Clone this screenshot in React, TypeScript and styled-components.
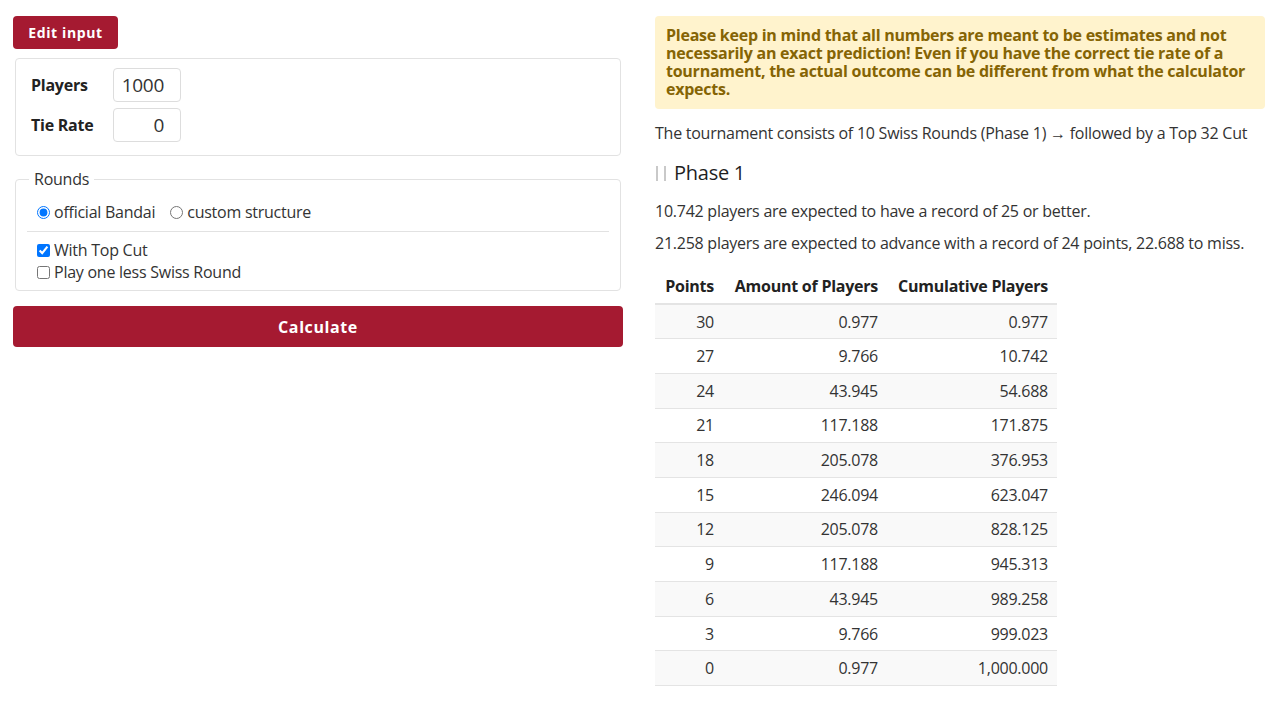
import React from "react";
import styled, { createGlobalStyle } from "styled-components";

const GlobalStyle = createGlobalStyle`
  body {
    margin: 0;
    background: #fff;
    font-family: "Open Sans", "Noto Sans", sans-serif;
    font-size: 16px;
    letter-spacing: -0.25px;
    color: #333;
  }
  * { box-sizing: border-box; }
`;

const Page = styled.div`
  display: grid;
  grid-template-columns: 610px 610px;
  column-gap: 32px;
  padding: 16px 13px;
  align-items: start;
`;

const Column = styled.div`
  display: flex;
  flex-direction: column;
`;

const RedButton = styled.button<{ $wide?: boolean }>`
  border: none;
  border-radius: 4px;
  background: #a51a31;
  color: #fff;
  font-family: "Open Sans", sans-serif;
  font-weight: 700;
  letter-spacing: 0.6px;
  cursor: pointer;
  font-size: ${(p) => (p.$wide ? "16px" : "14px")};
  height: ${(p) => (p.$wide ? "41px" : "33px")};
  width: ${(p) => (p.$wide ? "100%" : "105px")};
  padding: 0;
`;

const Card = styled.div`
  margin: 9px 2px 0;
  border: 1px solid #e2e2e2;
  border-radius: 4px;
  padding: 9px 15px 13px;
  display: flex;
  flex-direction: column;
  gap: 6px;
`;

const FieldRow = styled.label`
  display: grid;
  grid-template-columns: 82px 68px;
  align-items: center;
  font-weight: 700;
  color: #222;
`;

const NumInput = styled.input`
  height: 34px;
  width: 68px;
  border: 1px solid #ddd;
  border-radius: 4px;
  text-align: right;
  padding: 0 16px 0 6px;
  font-family: "Open Sans", sans-serif;
  font-size: 19px;
  letter-spacing: -0.3px;
  color: #333;
`;

const Fieldset = styled.fieldset`
  margin: 12px 2px 0;
  border: 1px solid #e2e2e2;
  border-radius: 4px;
  padding: 11px 11px 7px;
`;

const Legend = styled.legend`
  padding: 0 5px;
  margin-left: 2px;
  font-size: 16px;
  color: #333;
`;

const RadioRow = styled.div`
  display: flex;
  gap: 15px;
  padding: 0 0 8px 10px;
  border-bottom: 1px solid #e2e2e2;
`;

const Option = styled.label`
  display: flex;
  align-items: center;
  gap: 4px;
  line-height: 22px;

  input {
    margin: 0;
    width: 13px;
    height: 13px;
    accent-color: #0075ff;
  }
`;

const Checks = styled.div`
  display: flex;
  flex-direction: column;
  padding: 7px 0 0 10px;
`;

const CalcWrap = styled.div`
  margin-top: 15px;
`;

const Alert = styled.div`
  background: #fff3cd;
  border-radius: 4px;
  padding: 10px 11px 11px;
  color: #856404;
  font-weight: 700;
  font-size: 16px;
  line-height: 18px;
`;

const Para = styled.p<{ $top?: number }>`
  margin: ${(p) => p.$top ?? 14}px 0 0;
  line-height: 22px;
`;

const PhaseTitle = styled.h2`
  position: relative;
  margin: 16px 0 0;
  font-size: 20px;
  font-weight: 500;
  color: #1f1f1f;
  line-height: 26px;
  padding-left: 19px;

  &::before {
    content: "";
    position: absolute;
    left: 1px;
    top: 6px;
    width: 6px;
    height: 15px;
    border-left: 2px solid #c9c9c9;
    border-right: 2px solid #c9c9c9;
  }
`;

const Table = styled.table`
  margin-top: 17px;
  border-collapse: collapse;
  width: 402px;

  th {
    font-weight: 700;
    color: #222;
    text-align: right;
    white-space: nowrap;
    padding: 4px 9px 6px;
    height: 32px;
    border-bottom: 2px solid #e4e4e4;
  }
  td {
    text-align: right;
    white-space: nowrap;
    padding: 0 9px;
    height: 34.7px;
    border-bottom: 1px solid #e4e4e4;
    color: #333;
  }
  th:first-child, td:first-child { width: 68px; }
  th:nth-child(2), td:nth-child(2) { width: 164px; }
  tbody tr:nth-child(odd) { background: #f9f9f9; }
`;

const rows: [string, string, string][] = [
  ["30", "0.977", "0.977"],
  ["27", "9.766", "10.742"],
  ["24", "43.945", "54.688"],
  ["21", "117.188", "171.875"],
  ["18", "205.078", "376.953"],
  ["15", "246.094", "623.047"],
  ["12", "205.078", "828.125"],
  ["9", "117.188", "945.313"],
  ["6", "43.945", "989.258"],
  ["3", "9.766", "999.023"],
  ["0", "0.977", "1,000.000"],
];

export default function App() {
  return (
    <>
      <GlobalStyle />
      <Page>
        <Column>
          <div>
            <RedButton>Edit input</RedButton>
          </div>
          <Card>
            <FieldRow>
              Players
              <NumInput defaultValue="1000" />
            </FieldRow>
            <FieldRow>
              Tie Rate
              <NumInput defaultValue="0" />
            </FieldRow>
          </Card>
          <Fieldset>
            <Legend>Rounds</Legend>
            <RadioRow>
              <Option>
                <input type="radio" name="rounds" defaultChecked />
                official Bandai
              </Option>
              <Option>
                <input type="radio" name="rounds" />
                custom structure
              </Option>
            </RadioRow>
            <Checks>
              <Option>
                <input type="checkbox" defaultChecked />
                With Top Cut
              </Option>
              <Option>
                <input type="checkbox" />
                Play one less Swiss Round
              </Option>
            </Checks>
          </Fieldset>
          <CalcWrap>
            <RedButton $wide>Calculate</RedButton>
          </CalcWrap>
        </Column>
        <Column>
          <Alert>
            Please keep in mind that all numbers are meant to be estimates and not necessarily an
            exact prediction! Even if you have the correct tie rate of a tournament, the actual
            outcome can be different from what the calculator expects.
          </Alert>
          <Para $top={13}>
            The tournament consists of 10 Swiss Rounds (Phase 1) → followed by a Top 32 Cut
          </Para>
          <PhaseTitle>Phase 1</PhaseTitle>
          <Para $top={14}>10.742 players are expected to have a record of 25 or better.</Para>
          <Para $top={10}>
            21.258 players are expected to advance with a record of 24 points, 22.688 to miss.
          </Para>
          <Table>
            <thead>
              <tr>
                <th>Points</th>
                <th>Amount of Players</th>
                <th>Cumulative Players</th>
              </tr>
            </thead>
            <tbody>
              {rows.map((r) => (
                <tr key={r[0]}>
                  <td>{r[0]}</td>
                  <td>{r[1]}</td>
                  <td>{r[2]}</td>
                </tr>
              ))}
            </tbody>
          </Table>
        </Column>
      </Page>
    </>
  );
}
